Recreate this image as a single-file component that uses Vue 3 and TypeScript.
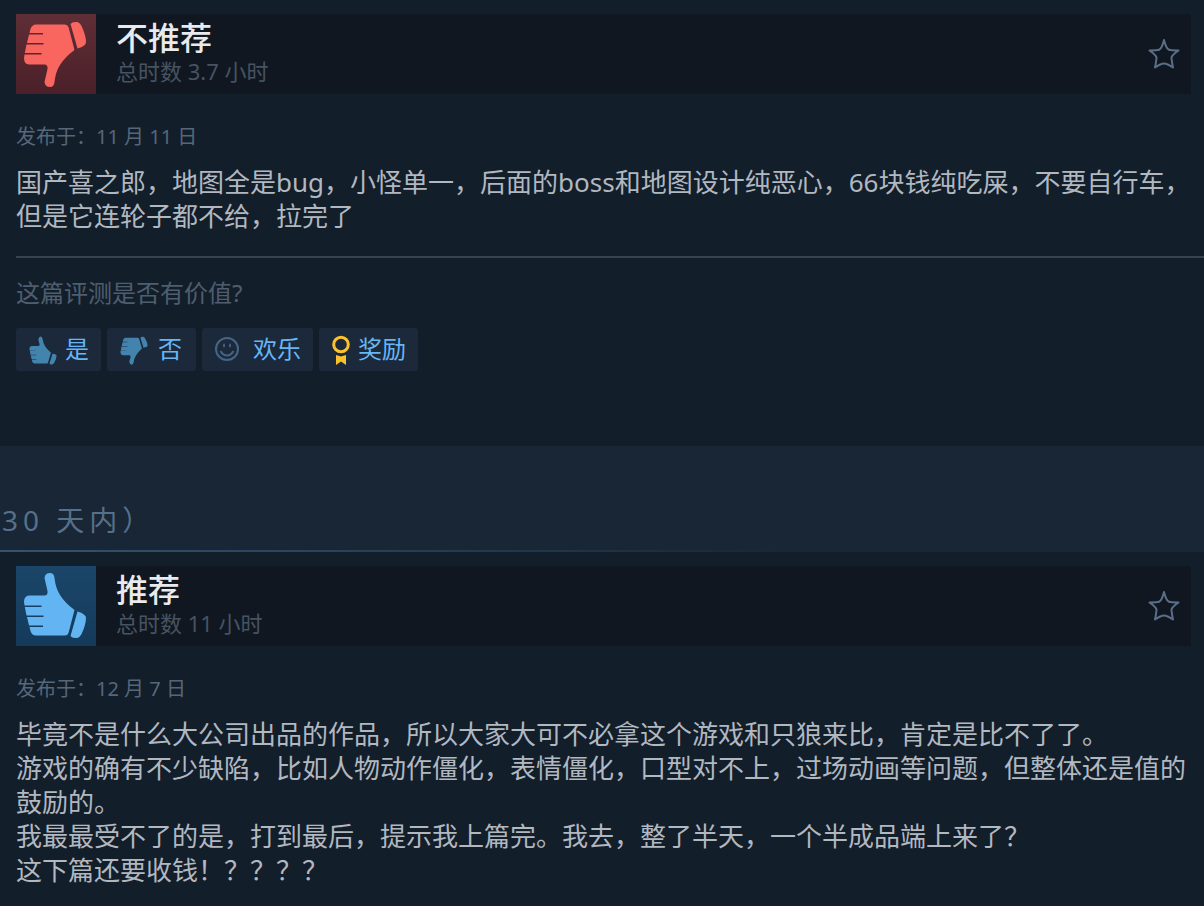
<script setup lang="ts">
interface Review {
  id: string
  positive: boolean
  verdict: string
  hours: string
  posted: string
  lines: string[]
}

const rejected: Review = {
  id: 'review-1',
  positive: false,
  verdict: '不推荐',
  hours: '总时数 3.7 小时',
  posted: '发布于：11 月 11 日',
  lines: [
    '国产喜之郎，地图全是bug，小怪单一，后面的boss和地图设计纯恶心，66块钱纯吃屎，不要自行车，但是它连轮子都不给，拉完了',
  ],
}

const recommended: Review = {
  id: 'review-2',
  positive: true,
  verdict: '推荐',
  hours: '总时数 11 小时',
  posted: '发布于：12 月 7 日',
  lines: [
    '毕竟不是什么大公司出品的作品，所以大家大可不必拿这个游戏和只狼来比，肯定是比不了了。',
    '游戏的确有不少缺陷，比如人物动作僵化，表情僵化，口型对不上，过场动画等问题，但整体还是值的鼓励的。',
    '我最最受不了的是，打到最后，提示我上篇完。我去，整了半天，一个半成品端上来了？',
    '这下篇还要收钱！？？？？',
  ],
}

const sections = [
  { key: 'first', heading: '', review: rejected, votable: true },
  { key: 'recent', heading: '30 天内）', review: recommended, votable: false },
]
</script>

<template>
  <main class="page">
    <svg class="defs" aria-hidden="true">
      <defs>
        <symbol id="thumb" viewBox="0 0 80 80">
          <path d="M28.500 12Q29 7 34 7Q38 7 38.500 12Q39.500 22 44 29Q49 37 58.500 44L52.500 67Q51.500 69.500 49 69.500H20Q16 69.500 14.500 65L13.500 61H27V59.500H13L11 51H27.500V49.500H10.500L8.800 41H25.500V39.500H8.500L8 36Q8 30 13 29.500L29 29.500Q32 29 31.500 25Z" />
          <path d="M61.500 45.500Q70 48 70 52Q70 58 66 67Q64 71.500 61 72Q56 72.500 54.500 70Z" />
        </symbol>
        <symbol id="thumb-small" viewBox="0 0 80 80">
          <path d="M28.500 14Q30 7 34 7Q38 8 38.500 13Q40 22 44 29Q49 37 58 45L51 68Q50 70 47 70H20Q15 69 14 64L13.500 60.500H24V59.500H13L11 50.500H24V49.500H10.500L9 40.500H22V39.500H8.500L8 36Q8 30 13 29.500L29 29.500Q32 29 31.500 25Z" />
          <path d="M61.500 47Q71 48 71 52Q71 58 66 67Q64 71.500 61 72Q56 72.500 54.500 70Z" />
        </symbol>
      </defs>
    </svg>

    <section v-for="s in sections" :key="s.key">
      <h2 v-if="s.heading" class="heading">{{ s.heading }}</h2>
      <article class="review">
        <header class="bar">
          <span class="badge" :class="s.review.positive ? 'up' : 'down'">
            <svg viewBox="0 0 80 80" aria-hidden="true"><use href="#thumb" /></svg>
          </span>
          <div class="summary">
            <h3 class="verdict">{{ s.review.verdict }}</h3>
            <p class="hours">{{ s.review.hours }}</p>
          </div>
          <button class="star" type="button" aria-label="收藏">
            <svg viewBox="0 0 32 32" aria-hidden="true">
              <path d="M16 2Q18 10 20.500 11.500Q23 12.500 30.500 12.500Q24 17 23.500 19.500Q23.500 22 25 29.500Q19 25.500 16 25.500Q13 25.500 7 29.500Q8.500 22 8.500 19.500Q8 17 1.500 12.500Q9 12.500 11.500 11.500Q14 10 16 2Z" />
            </svg>
          </button>
        </header>
        <p class="posted">{{ s.review.posted }}</p>
        <div class="body">
          <p v-for="line in s.review.lines" :key="line">{{ line }}</p>
        </div>
        <div v-if="s.votable" class="feedback">
          <p class="question">这篇评测是否有价值?</p>
          <div class="votes">
            <button class="vote" type="button">
              <svg class="hand" viewBox="7 4 65 69" aria-hidden="true"><use href="#thumb-small" width="80" height="80" /></svg>
              <span>是</span>
            </button>
            <button class="vote no" type="button">
              <svg class="hand" viewBox="7 4 65 69" aria-hidden="true">
                <use href="#thumb-small" width="80" height="80" transform="matrix(1 0 0 -1 0 80)" />
              </svg>
              <span>否</span>
            </button>
            <button class="vote funny" type="button">
              <svg class="smile" viewBox="0 0 24 26" aria-hidden="true">
                <circle cx="12" cy="12" r="11" />
                <path d="M5.500 14Q8 18.500 12 18.500T18.500 14" />
                <ellipse class="eye" cx="9" cy="8.500" rx="1" ry="2" />
                <ellipse class="eye" cx="15" cy="8.500" rx="1" ry="2" />
              </svg>
              <span>欢乐</span>
            </button>
            <button class="vote" type="button">
              <svg class="medal" viewBox="0 0 18 30" aria-hidden="true">
                <circle cx="9" cy="9.500" r="7.300" />
                <path d="M4 20L9 21.500L14 20V30L9 26.500L4 30Z" />
              </svg>
              <span>奖励</span>
            </button>
          </div>
        </div>
      </article>
    </section>
  </main>
</template>

<style>
body {
  margin: 0;
  background: #131e2b;
}
</style>

<style scoped>
.page {
  min-height: 100vh;
  overflow-x: hidden;
  color: #b1b8c0;
  font-family: "Noto Sans", "Noto Sans CJK SC", sans-serif;
}
.defs {
  display: block;
  width: 0;
  height: 0;
}
h2, h3, p {
  margin: 0;
  font-weight: 400;
}
button {
  font: inherit;
  border: 0;
  cursor: pointer;
}
.heading {
  padding: 54px 2px 10px;
  border-bottom: 2px solid;
  border-image: linear-gradient(90deg, #33536f 0%, #2a455e 25%, #192636 65%) 1;
  background: #192636;
  color: #56708a;
  font-size: 28px;
  line-height: 40px;
  letter-spacing: 5px;
}
.review {
  padding: 14px 0 20px 16px;
}
.bar {
  display: flex;
  align-items: center;
  gap: 20px;
  height: 80px;
  margin-right: 13px;
  background: #101720;
}
.badge {
  width: 80px;
  height: 80px;
  flex: none;
}
.badge svg {
  display: block;
  width: 80px;
  height: 80px;
}
.up {
  background: linear-gradient(#1b4669, #143a5b);
  fill: #62b5f2;
}
.down {
  background: linear-gradient(#5f2e37, #4b2028);
  fill: #f9655f;
}
.down svg {
  transform: scaleY(-1);
}
.summary {
  flex: 1;
  padding-bottom: 6px;
}
.verdict {
  color: #e8eaec;
  font-size: 32px;
  font-weight: 500;
  line-height: 40px;
}
.hours {
  color: #465362;
  font-size: 22px;
  line-height: 26px;
}
.star {
  padding: 0;
  margin-right: 11px;
  background: none;
}
.star svg {
  display: block;
  width: 32px;
  height: 32px;
  fill: none;
  stroke: #5a6f87;
  stroke-width: 2;
  stroke-linejoin: round;
}
.posted {
  margin-top: 28px;
  color: #56677a;
  font-size: 20px;
  line-height: 30px;
}
.body {
  margin-top: 13px;
  font-size: 26px;
  line-height: 34px;
}
.feedback {
  margin-top: 23px;
  padding: 19px 0 55px;
  border-top: 2px solid #364351;
}
.question {
  color: #4f5e6f;
  font-size: 24px;
  line-height: 32px;
}
.votes {
  display: flex;
  gap: 6px;
  margin-top: 19px;
}
.vote {
  display: flex;
  align-items: center;
  gap: 8px;
  height: 43px;
  padding: 0 12px 0 13px;
  border-radius: 3px;
  background: #1c293a;
  color: #66b6f6;
  font-size: 24px;
  line-height: 43px;
}
.vote span {
  padding-bottom: 2px;
}
.no {
  gap: 10px;
  padding-right: 14px;
}
.funny {
  gap: 14px;
}
.hand {
  width: 28px;
  height: 30px;
  fill: #4384af;
}
.smile {
  width: 24px;
  height: 26px;
  fill: none;
  stroke: #446584;
  stroke-width: 2;
}
.smile .eye {
  fill: #446584;
  stroke: none;
}
.medal {
  width: 18px;
  height: 30px;
  fill: #fcc22b;
}
.medal circle {
  fill: none;
  stroke: #fcc22b;
  stroke-width: 3;
}
</style>
